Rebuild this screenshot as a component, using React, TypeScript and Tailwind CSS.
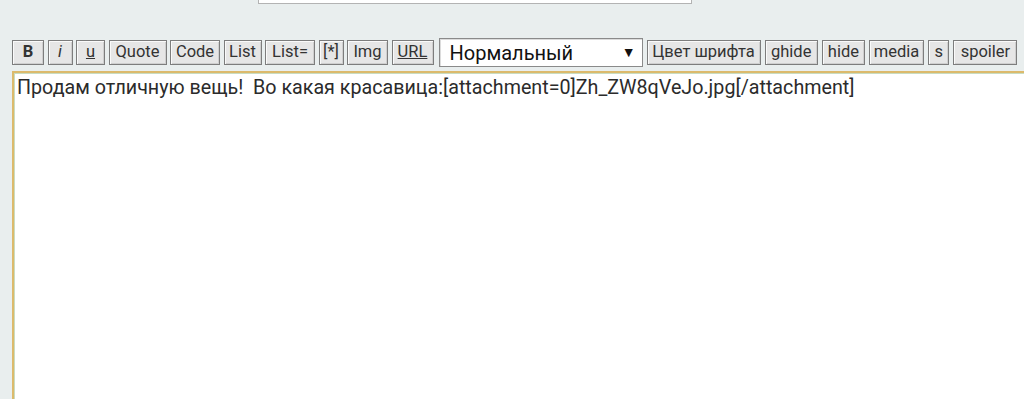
const buttons: { label: string; cls?: string; w: string }[] = [
  { label: "B", cls: "font-bold", w: "w-[32px]" },
  { label: "i", cls: "italic", w: "w-[25px]" },
  { label: "u", cls: "underline", w: "w-[29px]" },
  { label: "Quote", w: "w-[58px]" },
  { label: "Code", w: "w-[50px]" },
  { label: "List", w: "w-[38px]" },
  { label: "List=", w: "w-[50px]" },
  { label: "[*]", w: "w-[25px]" },
  { label: "Img", w: "w-[41px]" },
  { label: "URL", cls: "underline", w: "w-[42px]" },
];

const buttons2: { label: string; w: string }[] = [
  { label: "Цвет шрифта", w: "w-[114px]" },
  { label: "ghide", w: "w-[53px]" },
  { label: "hide", w: "w-[43px]" },
  { label: "media", w: "w-[55px]" },
  { label: "s", w: "w-[21px]" },
  { label: "spoiler", w: "w-[64px]" },
];

const Btn = ({ label, cls, w }: { label: string; cls?: string; w: string }) => (
  <button
    className={`h-[25px] ${w} border border-[#7d7d7d] bg-[#e6e6e6] text-[16.5px] leading-none text-[#333] shadow-[inset_1px_1px_0_#fafafa,inset_-1px_-1px_0_#cfcfcf] flex items-center justify-center ${cls ?? ""}`}
  >
    {label}
  </button>
);

const App = () => {
  return (
    <div className="w-[1024px] h-[399px] overflow-hidden bg-[#e9eeee] font-['Roboto',sans-serif]">
      <div className="ml-[258px] w-[434px] h-[4px] border border-t-0 border-[#b3b3b3] bg-white" />

      <div className="flex items-center mt-[34px] ml-[12px]">
        <div className="flex items-center gap-[3.5px]">
          {buttons.map((b) => (
            <Btn key={b.label} {...b} />
          ))}
        </div>
        <div className="ml-[5px] w-[204px] h-[29px] border border-[#8a8a8a] bg-white flex items-center justify-between pl-[10px] pr-[6px] text-[20px] text-[#111] shadow-[inset_1px_1px_0_#dcdcdc]">
          <span>Нормальный</span>
          <span className="text-[14px]">▼</span>
        </div>
        <div className="ml-[4px] flex items-center gap-[4.2px]">
          {buttons2.map((b) => (
            <Btn key={b.label} {...b} />
          ))}
        </div>
      </div>

      <div className="mt-[4px] ml-[12px] w-[1020px] h-[340px] border-2 border-r-0 border-b-0 border-[#dcba6c] bg-white shadow-[inset_1px_1px_0_#c9dcc0] pl-[3px] pt-[3px] text-[19.7px] text-[#2b2b2b] leading-[24px]">
        Продам отличную вещь!&nbsp; Во какая красавица:[attachment=0]Zh_ZW8qVeJo.jpg[/attachment]
      </div>
    </div>
  );
};

export default App;
